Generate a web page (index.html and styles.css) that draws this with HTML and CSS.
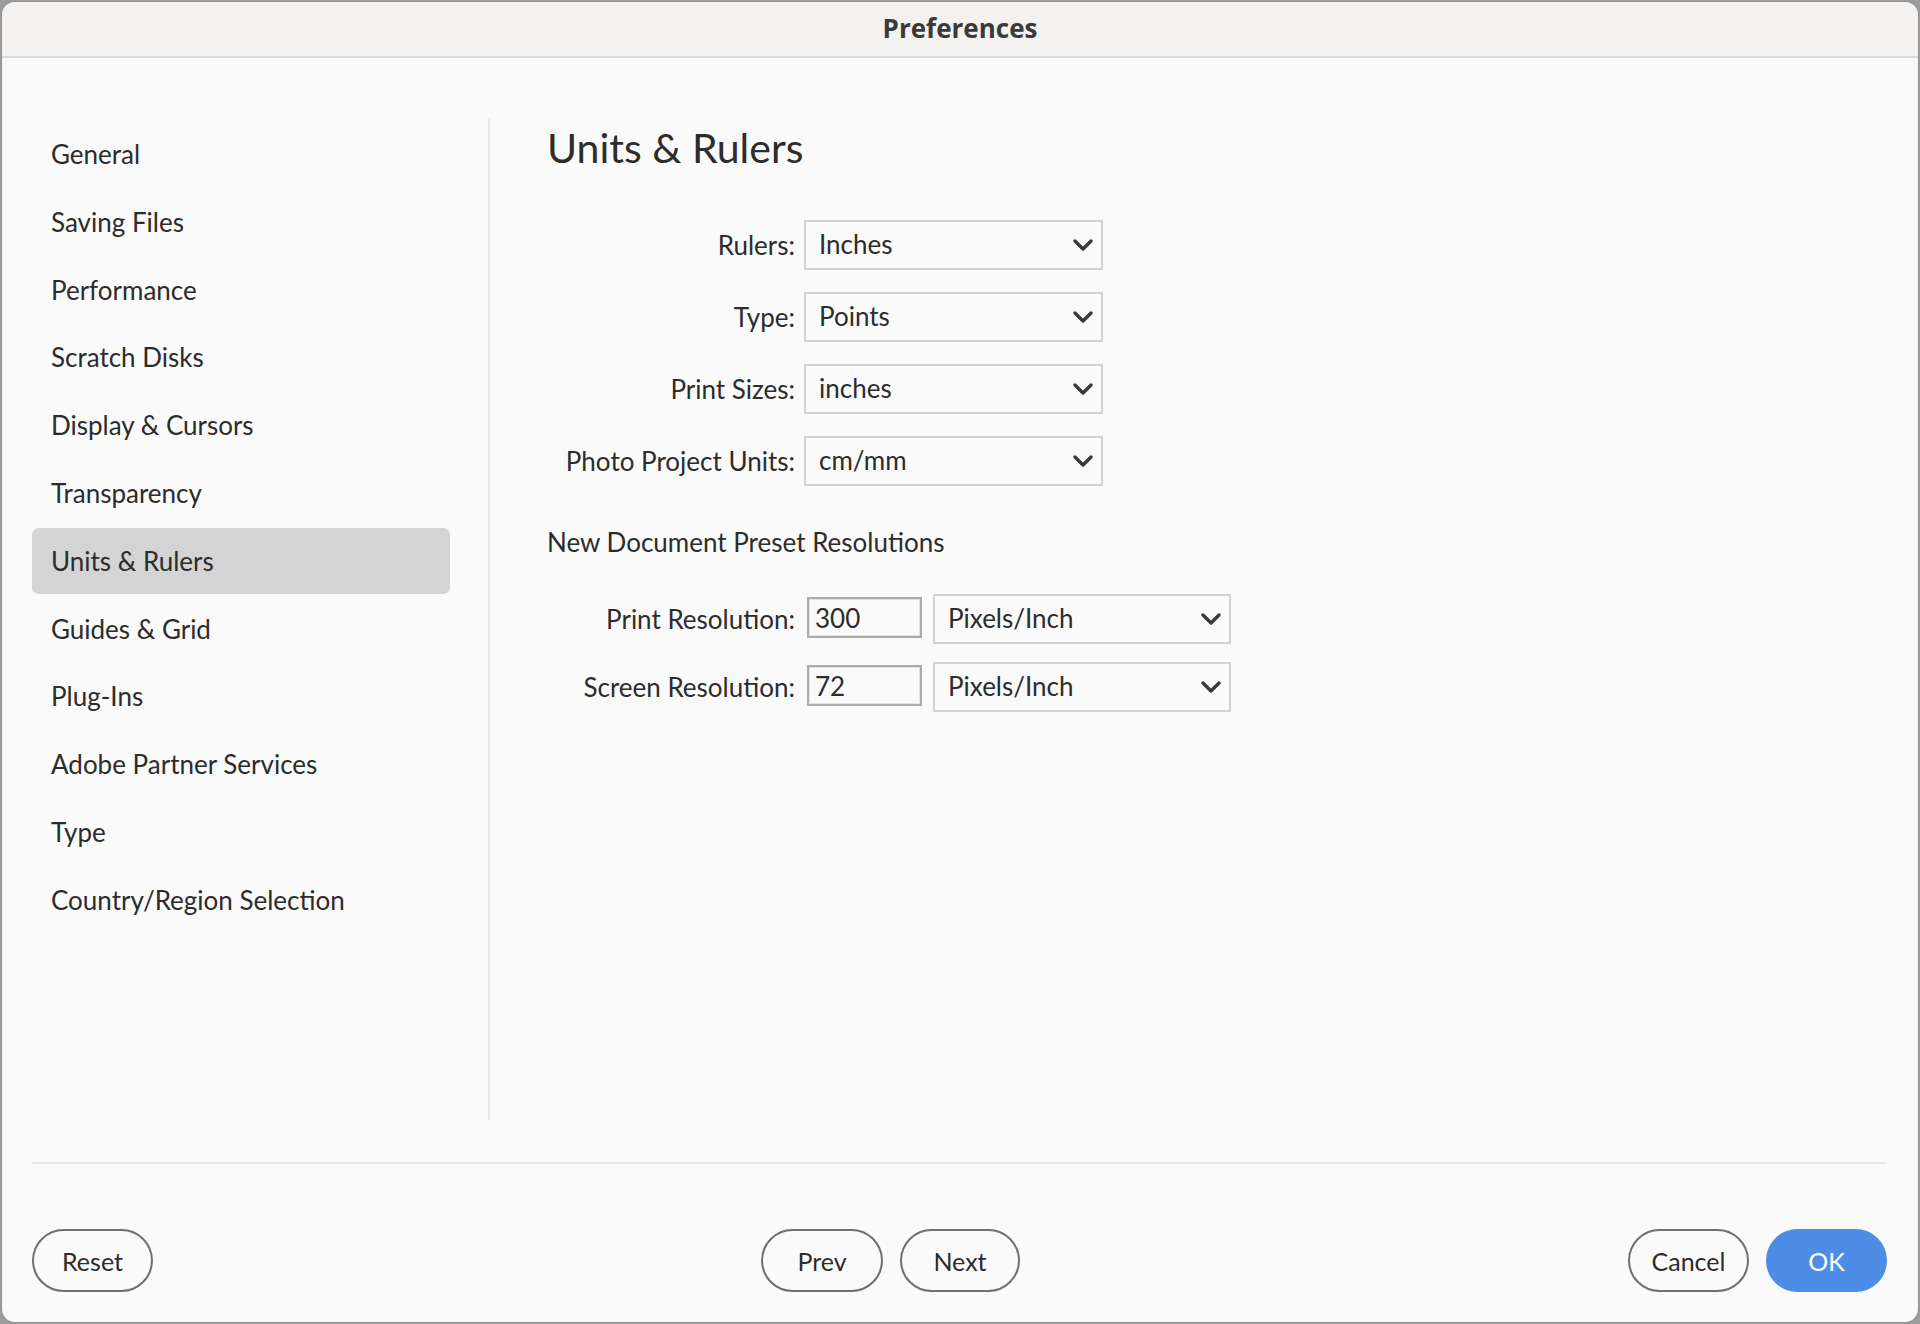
FILE: index.html
```html
<!DOCTYPE html>
<html lang="en">
<head>
<meta charset="utf-8">
<title>Preferences</title>
<link rel="stylesheet" href="styles.css">
</head>
<body>
<div class="window">
  <div class="titlebar">Preferences</div>
  <div class="main">
    <nav class="sidebar">
      <div class="nav-item">General</div>
      <div class="nav-item">Saving Files</div>
      <div class="nav-item">Performance</div>
      <div class="nav-item">Scratch Disks</div>
      <div class="nav-item">Display &amp; Cursors</div>
      <div class="nav-item">Transparency</div>
      <div class="nav-item selected">Units &amp; Rulers</div>
      <div class="nav-item">Guides &amp; Grid</div>
      <div class="nav-item">Plug-Ins</div>
      <div class="nav-item">Adobe Partner Services</div>
      <div class="nav-item">Type</div>
      <div class="nav-item">Country/Region Selection</div>
    </nav>
    <section class="content">
      <h1 class="heading">Units &amp; Rulers</h1>
      <div class="unit-grid">
        <label class="label">Rulers:</label>
        <div class="select"><span>Inches</span><svg class="chev" viewBox="0 0 20 12"><path d="M2 2 L10 10 L18 2"/></svg></div>
        <label class="label">Type:</label>
        <div class="select"><span>Points</span><svg class="chev" viewBox="0 0 20 12"><path d="M2 2 L10 10 L18 2"/></svg></div>
        <label class="label">Print Sizes:</label>
        <div class="select"><span>inches</span><svg class="chev" viewBox="0 0 20 12"><path d="M2 2 L10 10 L18 2"/></svg></div>
        <label class="label">Photo Project Units:</label>
        <div class="select"><span>cm/mm</span><svg class="chev" viewBox="0 0 20 12"><path d="M2 2 L10 10 L18 2"/></svg></div>
      </div>
      <div class="subheading">New Document Preset Resolutions</div>
      <div class="res-grid">
        <label class="label">Print Resolution:</label>
        <div class="input">300</div>
        <div class="select"><span>Pixels/Inch</span><svg class="chev" viewBox="0 0 20 12"><path d="M2 2 L10 10 L18 2"/></svg></div>
        <label class="label">Screen Resolution:</label>
        <div class="input">72</div>
        <div class="select"><span>Pixels/Inch</span><svg class="chev" viewBox="0 0 20 12"><path d="M2 2 L10 10 L18 2"/></svg></div>
      </div>
    </section>
  </div>
  <footer class="footer">
    <div class="btn-group">
      <button class="btn btn-reset">Reset</button>
    </div>
    <div class="btn-group">
      <button class="btn btn-prev">Prev</button>
      <button class="btn btn-next">Next</button>
    </div>
    <div class="btn-group">
      <button class="btn btn-cancel">Cancel</button>
      <button class="btn btn-primary">OK</button>
    </div>
  </footer>
</div>
</body>
</html>
```
FILE: styles.css
```css
* { box-sizing: border-box; }
html, body {
  margin: 0;
  padding: 0;
  background: #9d9d9d;
}
body {
  width: 1920px;
  height: 1324px;
  padding: 2px;
  font-family: Lato, "Open Sans", sans-serif;
  color: #2c2c2c;
}
.window {
  width: 1916px;
  height: 1320px;
  background: #fafafa;
  border-radius: 13px;
  overflow: hidden;
  display: flex;
  flex-direction: column;
  box-shadow: 0 0 0 1px #8f8f8f;
}
.titlebar {
  height: 56px;
  flex: none;
  background: #f3f2f0;
  border-bottom: 2px solid #dddbd9;
  display: flex;
  align-items: center;
  justify-content: center;
  font-family: "Open Sans", Lato, sans-serif;
  font-weight: 700;
  font-size: 26px;
  color: #3a3a3a;
  padding-bottom: 2px;
}
.main {
  height: 1104px;
  flex: none;
  display: flex;
  padding-top: 61px;
}
.sidebar {
  margin-left: 30px;
  width: 458px;
  height: 1001px;
  padding-top: 2px;
  padding-right: 38px;
  border-right: 2px solid #e9e9e9;
  display: flex;
  flex-direction: column;
  gap: 1.8px;
}
.nav-item {
  height: 66px;
  flex: none;
  display: flex;
  align-items: center;
  padding-left: 19px;
  font-size: 26px;
  border-radius: 7px;
  color: #2c2c2c;
}
.nav-item.selected {
  background: #d4d4d4;
}
.content {
  padding-left: 57px;
}
.heading {
  margin: 5px 0 0 0;
  font-size: 41px;
  line-height: 48px;
  font-weight: 400;
  color: #2c2c2c;
}
.unit-grid {
  margin-top: 48px;
  display: grid;
  grid-template-columns: 248px 299px;
  grid-auto-rows: 50px;
  column-gap: 9px;
  row-gap: 22px;
}
.label {
  display: flex;
  align-items: center;
  justify-content: flex-end;
  font-size: 26px;
  color: #2c2c2c;
  white-space: nowrap;
}
.select {
  display: flex;
  align-items: center;
  justify-content: space-between;
  border: 2px solid #d3d3d3;
  background: #fafafa;
  padding: 0 8px 0 13px;
  font-size: 26px;
  color: #2c2c2c;
}
.select span {
  margin-top: -2px;
}
.chev {
  width: 20px;
  height: 12px;
  fill: none;
  stroke: #3a3a3a;
  stroke-width: 3.4;
  stroke-linecap: round;
  stroke-linejoin: round;
}
.subheading {
  margin-top: 41px;
  font-size: 26px;
  line-height: 30px;
  color: #2c2c2c;
}
.res-grid {
  margin-top: 37px;
  display: grid;
  grid-template-columns: 248px 127px 309px;
  grid-auto-rows: 50px;
  row-gap: 18px;
}
.res-grid .input {
  margin-left: 12px;
}
.res-grid .select {
  margin-left: 11px;
  width: 298px;
}
.input {
  align-self: center;
  height: 41px;
  width: 115px;
  margin-top: -3px;
  border: 2px solid #ababab;
  box-shadow: inset 0 0 0 1px #e2e2e2;
  background: #fafafa;
  display: flex;
  align-items: center;
  padding-left: 6px;
  font-size: 26px;
  color: #2c2c2c;
}
.footer {
  margin: 0 31px 0 30px;
  border-top: 2px solid #e7e7e7;
  padding-top: 65px;
  display: flex;
  justify-content: space-between;
  align-items: flex-start;
}
.btn-group {
  display: flex;
  gap: 17px;
}
.btn {
  height: 63px;
  width: 121px;
  border: 2px solid #6f6f6f;
  border-radius: 32px;
  background: transparent;
  font-family: Lato, "Open Sans", sans-serif;
  font-size: 25px;
  color: #2c2c2c;
  padding: 0;
  display: flex;
  align-items: center;
  justify-content: center;
}
.btn-prev { width: 122px; }
.btn-next { width: 120px; }
.btn-primary {
  background: #4d8de6;
  border-color: #4d8de6;
  color: #ffffff;
}
```
